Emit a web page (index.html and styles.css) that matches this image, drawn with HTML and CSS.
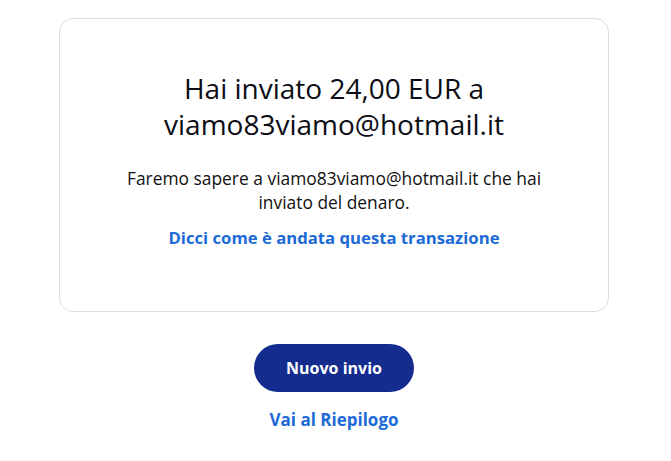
FILE: index.html
```html
<!DOCTYPE html>
<html lang="it">
<head>
<meta charset="utf-8">
<title>Invio completato</title>
<link rel="stylesheet" href="styles.css">
</head>
<body>
<main class="page">
  <section class="card">
    <h1 class="title">Hai inviato 24,00 EUR a viamo83viamo@hotmail.it</h1>
    <p class="message">Faremo sapere a viamo83viamo@hotmail.it che hai inviato del denaro.</p>
    <a class="link" href="#">Dicci come è andata questa transazione</a>
  </section>
  <div class="actions">
    <button class="btn-primary" type="button">Nuovo invio</button>
    <a class="link link-small" href="#">Vai al Riepilogo</a>
  </div>
</main>
</body>
</html>
```
FILE: styles.css
```css
* { box-sizing: border-box; }
html, body { margin: 0; padding: 0; background: #ffffff; }
body {
  font-family: "Open Sans", "Liberation Sans", sans-serif;
  color: #111111;
}
.page {
  display: flex;
  flex-direction: column;
  align-items: center;
  padding-top: 18px;
  padding-right: 3px;
}
.card {
  width: 550px;
  height: 294px;
  border: 1px solid #dcdcdc;
  border-radius: 14px;
  display: flex;
  flex-direction: column;
  align-items: center;
  padding: 51px 30px 0;
  text-align: center;
}
.title {
  margin: 0;
  width: 360px;
  font-size: 28px;
  line-height: 36px;
  font-weight: 400;
  color: #0c0c14;
}
.message {
  margin: 24px 0 0;
  width: 470px;
  font-size: 17.4px;
  line-height: 24px;
  color: #111;
}
.link {
  color: #1d6ad6;
  font-weight: 700;
  font-size: 16.7px;
  line-height: 24px;
  text-decoration: none;
}
.card .link { margin-top: 12px; }
.actions {
  display: flex;
  flex-direction: column;
  align-items: center;
  margin-top: 32px;
}
.btn-primary {
  width: 160px;
  height: 48px;
  border: none;
  border-radius: 24px;
  background: #142c8e;
  color: #ffffff;
  font-family: inherit;
  font-size: 16px;
  font-weight: 700;
}
.actions .link-small { margin-top: 16px; font-size: 17px; }
```
